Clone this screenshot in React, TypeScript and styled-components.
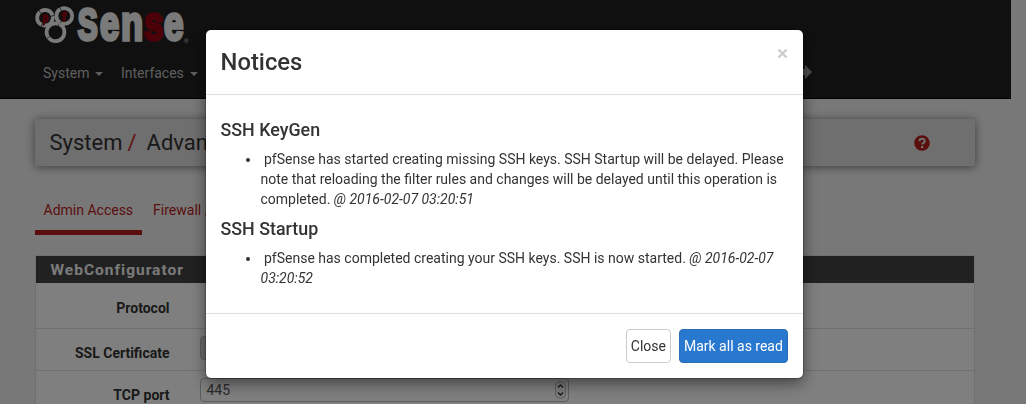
import React from "react";
import styled, { createGlobalStyle } from "styled-components";

const GlobalStyle = createGlobalStyle`
  * { box-sizing: border-box; }
  html, body { margin: 0; height: 100%; overflow: hidden; }
  body {
    background: #f1f1f1;
    color: #333;
    font: 14px/20px Roboto, "Liberation Sans", sans-serif;
  }
  h2, h3, h4, p, ul { margin: 0; padding: 0; }
`;

const Page = styled.div`
  height: 404px;
  overflow: hidden;
`;

const Navbar = styled.header`
  width: 1011px;
  height: 99px;
  padding: 0 0 0 35px;
  background: #212121;
  border-bottom: 1px solid #000;
`;

const Logo = styled.svg`
  display: block;
  width: 160px;
  height: 50px;
  overflow: visible;
`;

const Menu = styled.nav`
  display: flex;
  align-items: center;
  height: 46px;
  padding-left: 8px;
  color: #bdbdbd;
`;

const MenuItem = styled.span<{ $width: number }>`
  display: flex;
  align-items: center;
  gap: 6px;
  width: ${(p) => p.$width}px;
`;

const Caret = styled.i`
  border-top: 4px solid #bdbdbd;
  border-left: 4px solid transparent;
  border-right: 4px solid transparent;
  margin-top: 1px;
`;

const LogoutIcon = styled.svg`
  width: 16px;
  height: 14px;
  margin: -3px 0 0 597px;
`;

const Container = styled.main`
  width: 940px;
  margin-left: 34.5px;
`;

const Breadcrumb = styled.div`
  display: flex;
  align-items: center;
  justify-content: space-between;
  height: 47px;
  margin-top: 20px;
  padding: 0 45px 0 15px;
  background: #dedede;
  border-radius: 2px;
  box-shadow: 0 1px 10px rgba(0, 0, 0, 0.5);
  font-size: 22px;
`;

const Slash = styled.span`
  color: #c1272d;
  margin: 0 10px 0 5px;
`;

const HelpIcon = styled.svg`
  width: 16px;
  height: 16px;
`;

const Tabs = styled.nav`
  display: flex;
  margin-top: 24px;
  height: 45px;
`;

const Tab = styled.span<{ $active?: boolean }>`
  padding: 10px 9px 0;
  margin-right: 2px;
  color: #b71c1c;
  white-space: nowrap;
  border-bottom: 5px solid ${(p) => (p.$active ? "#b71c1c" : "transparent")};
`;

const Panel = styled.section`
  margin-top: 20px;
  border: 1px solid #e0e0e0;
  background: #fff;
`;

const PanelHeading = styled.h2`
  height: 27px;
  padding-left: 15px;
  background: #424242;
  color: #f5f5f5;
  font-size: 15.5px;
  font-weight: 700;
  line-height: 28px;
  letter-spacing: 1px;
`;

const FormRow = styled.div<{ $height: number; $top?: number }>`
  display: grid;
  grid-template-columns: 134px 369px;
  column-gap: 30px;
  height: ${(p) => p.$height}px;
  padding-top: ${(p) => p.$top ?? 7}px;
  border-bottom: 1px solid #e0e0e0;
`;

const Label = styled.label`
  padding-top: 7px;
  text-align: right;
  font-weight: 700;
`;

const Field = styled.div<{ $raised?: boolean }>`
  display: flex;
  align-items: center;
  justify-content: space-between;
  height: 24px;
  padding: 0 2px 0 6px;
  border: 1px solid #bbb;
  border-radius: 4px;
  background: ${(p) => (p.$raised ? "#d8d8d8" : "#fff")};
  color: #555;
`;

const Stepper = styled.svg`
  width: 11px;
  height: 20px;
`;

const Backdrop = styled.div`
  position: fixed;
  inset: 0;
  padding: 30px 0 0 205.5px;
  background: rgba(0, 0, 0, 0.5);
`;

const Dialog = styled.div`
  width: 597.4px;
  height: 348px;
  background: #fff;
  border-radius: 5px;
  box-shadow: 0 5px 15px rgba(0, 0, 0, 0.5), 0 0 0 1px rgba(0, 0, 0, 0.2);
`;

const DialogHeader = styled.div`
  display: flex;
  justify-content: space-between;
  height: 65px;
  padding: 15px 15px 0;
  border-bottom: 1px solid #e0e0e0;
`;

const DialogTitle = styled.h3`
  font-size: 23.8px;
  font-weight: 500;
  line-height: 34px;
`;

const CloseIcon = styled.svg`
  width: 11px;
  height: 11px;
  margin-top: 2.5px;
`;

const DialogBody = styled.div`
  height: 218px;
  padding: 25px 15px 0;
`;

const NoticeTitle = styled.h4`
  height: 29px;
  font-size: 17.85px;
  font-weight: 500;
  line-height: 20px;
`;

const NoticeList = styled.ul`
  padding-left: 40px;
  margin-bottom: 10px;
`;

const DialogFooter = styled.div`
  display: flex;
  justify-content: flex-end;
  gap: 8px;
  padding: 15px;
  border-top: 1px solid #e0e0e0;
`;

const Button = styled.button<{ $primary?: boolean }>`
  height: 34px;
  padding: 0 4px;
  font: inherit;
  white-space: nowrap;
  border-radius: 4px;
  border: 1px solid ${(p) => (p.$primary ? "#2a6fb5" : "#ccc")};
  background: ${(p) => (p.$primary ? "#2878cf" : "#fff")};
  color: ${(p) => (p.$primary ? "#fff" : "#333")};
`;

const letters = [
  { c: "S", x: 42.8, size: 44, sx: 0.68, red: false },
  { c: "e", x: 65, size: 48, sx: 0.72, red: false },
  { c: "n", x: 86, size: 49, sx: 0.74, red: false },
  { c: "s", x: 109, size: 48, sx: 0.73, red: true },
  { c: "e", x: 129, size: 48, sx: 0.73, red: false },
];

function BrandLogo() {
  return (
    <Logo viewBox="0 0 160 50">
      <g fill="none" stroke="#f5f5f5" strokeWidth="3.8">
        <circle cx="10" cy="17.8" r="7.8" strokeDasharray="15 0.7" />
        <circle cx="29.3" cy="16" r="7.9" strokeDasharray="16 0.7" />
        <circle cx="20.5" cy="32.3" r="8.9" strokeDasharray="22 0.6" />
      </g>
      <g fontFamily="Liberation Sans" fontWeight="700" fill="#990010" stroke="#990010" strokeWidth="1">
        <text x="7.2" y="21.5" fontSize="12" textLength="6" lengthAdjust="spacingAndGlyphs">p</text>
        <text x="26.8" y="21" fontSize="13">f</text>
      </g>
      {letters.map((l, i) => (
        <text
          key={i}
          transform={`translate(${l.x} 40.3) scale(${l.sx} 1)`}
          fontFamily="Liberation Sans"
          fontWeight="700"
          fontSize={l.size}
          fill={l.red ? "#990010" : "#f5f5f5"}
          stroke={l.red ? "#990010" : "#f5f5f5"}
          strokeWidth="3.4"
        >
          {l.c}
        </text>
      ))}
      <text x="149" y="43" fontFamily="Liberation Sans" fontSize="6" fill="#ddd">®</text>
    </Logo>
  );
}

export default function App() {
  return (
    <>
      <GlobalStyle />
      <Page>
        <Navbar>
          <BrandLogo />
          <Menu>
            <MenuItem $width={78}>System <Caret /></MenuItem>
            <MenuItem $width={78}>Interfaces <Caret /></MenuItem>
            <LogoutIcon viewBox="0 0 16 14">
              <path d="M2 4H9V0L16 7L9 14V10H2Z" fill="#9d9d9d" />
            </LogoutIcon>
          </Menu>
        </Navbar>
        <Container>
          <Breadcrumb>
            <span>System<Slash>/</Slash>Advanced</span>
            <HelpIcon viewBox="0 0 16 16">
              <circle cx="8" cy="8" r="7.8" fill="#b71c1c" />
              <path d="M5.4 6.1C5.6 2.9 10.8 3 10.7 6C10.7 7.8 8.2 7.8 8.2 9.6" fill="none" stroke="#dedede" strokeWidth="2.1" />
              <rect x="7" y="10.9" width="2.3" height="2.1" fill="#dedede" />
            </HelpIcon>
          </Breadcrumb>
          <Tabs>
            <Tab $active>Admin Access</Tab>
            <Tab>Firewall / NAT</Tab>
          </Tabs>
          <Panel>
            <PanelHeading>WebConfigurator</PanelHeading>
            <FormRow $height={46} $top={8}>
              <Label>Protocol</Label>
            </FormRow>
            <FormRow $height={42}>
              <Label>SSL Certificate</Label>
              <Field $raised />
            </FormRow>
            <FormRow $height={46}>
              <Label>TCP port</Label>
              <Field>
                445
                <Stepper viewBox="0 0 11 20">
                  <rect x=".5" y="1.5" width="10" height="17" rx="5" fill="#f5f5f5" stroke="#bbb" />
                  <path d="M3 7.5L5.5 5L8 7.5M3 12.5L5.5 15L8 12.5" fill="none" stroke="#333" strokeWidth="1.4" />
                </Stepper>
              </Field>
            </FormRow>
          </Panel>
        </Container>
      </Page>
      <Backdrop>
        <Dialog role="dialog">
          <DialogHeader>
            <DialogTitle>Notices</DialogTitle>
            <CloseIcon viewBox="0 0 11 11">
              <path d="M1.5 1.5L9.5 9.5M9.5 1.5L1.5 9.5" stroke="#ccc" strokeWidth="2.4" />
            </CloseIcon>
          </DialogHeader>
          <DialogBody>
            <NoticeTitle>SSH KeyGen</NoticeTitle>
            <NoticeList>
              <li>
                &nbsp;pfSense has started creating missing SSH keys. SSH Startup will be delayed. Please
                note that reloading the filter rules and changes will be delayed until this operation is
                completed. <em>@ 2016-02-07 03:20:51</em>
              </li>
            </NoticeList>
            <NoticeTitle>SSH Startup</NoticeTitle>
            <NoticeList>
              <li>
                &nbsp;pfSense has completed creating your SSH keys. SSH is now started.{" "}
                <em>@ 2016-02-07 03:20:52</em>
              </li>
            </NoticeList>
          </DialogBody>
          <DialogFooter>
            <Button>Close</Button>
            <Button $primary>Mark all as read</Button>
          </DialogFooter>
        </Dialog>
      </Backdrop>
    </>
  );
}
